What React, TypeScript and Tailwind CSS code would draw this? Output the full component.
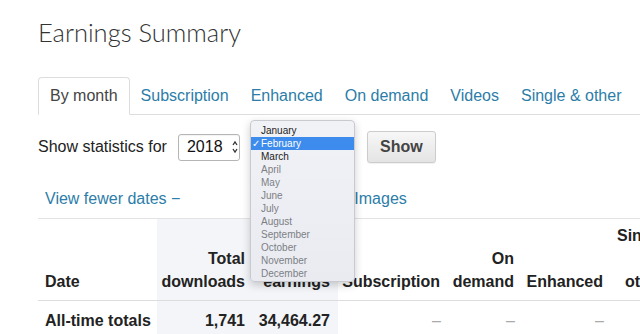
import React from 'react';

const tabs = ['By month', 'Subscription', 'Enhanced', 'On demand', 'Videos', 'Single & other'];

const months = [
    'January', 'February', 'March', 'April', 'May', 'June',
    'July', 'August', 'September', 'October', 'November', 'December',
];

const App: React.FC = () => {
    return (
        <div className="relative w-[640px] h-[334px] overflow-hidden bg-white pl-[38px] font-['Liberation_Sans',Arial,sans-serif] text-[#333]">
            {/* title */}
            <h1 className="pt-[15px] h-[77px] font-['Lato',sans-serif] font-light text-[25.5px] leading-[34px] text-[#333] whitespace-nowrap">
                Earnings Summary
            </h1>

            {/* tabs */}
            <div className="flex w-[602px] h-[38px] border-b border-[#ddd] text-[16px] whitespace-nowrap">
                {tabs.map((tab, i) => (
                    <div
                        key={tab}
                        className={
                            i === 0
                                ? 'shrink-0 flex items-center px-[11px] -mb-px bg-white border border-[#ddd] border-b-white rounded-t-[4px] text-[#444]'
                                : 'shrink-0 flex items-center px-[11px] text-[#2c7da8]'
                        }
                    >
                        {tab}
                    </div>
                ))}
            </div>

            {/* controls */}
            <div className="flex items-center h-[32px] mt-[16px] text-[16px] whitespace-nowrap">
                <span className="text-[#222]">Show statistics for</span>
                <div className="flex items-center ml-[11px] w-[62px] h-[27px] border border-[#b5b5b5] rounded-[3px] bg-white pl-[8px] shadow-[inset_0_1px_1px_rgba(0,0,0,0.05)]">
                    <span className="text-[#111]">2018</span>
                    <svg className="ml-[9px]" width="6" height="14" viewBox="0 0 6 14">
                        <path d="M1 5 L3 2 L5 5" fill="none" stroke="#333" strokeWidth="1.3" />
                        <path d="M1 9 L3 12 L5 9" fill="none" stroke="#333" strokeWidth="1.3" />
                    </svg>
                </div>
                <div className="ml-[10px] w-[105px] h-[27px]" />
                <button className="ml-[12px] w-[69px] h-[32px] rounded-[3px] border border-[#ccc] bg-gradient-to-b from-[#f7f7f7] to-[#e4e4e4] font-bold text-[#444] text-[16px] shadow-[0_1px_1px_rgba(0,0,0,0.06)]">
                    Show
                </button>
            </div>

            {/* links */}
            <div className="flex items-center h-[24px] mt-[24px] text-[16px] text-[#2c7da8] whitespace-nowrap">
                <span className="ml-[7px]">View fewer dates −</span>
                <span className="ml-[174px]">Images</span>
            </div>

            {/* table */}
            <table className="w-[634px] max-w-none mt-[7px] border-t border-[#e3e3e3] border-collapse table-fixed text-[16px] text-[#222]">
                <colgroup>
                    <col className="w-[119px]" />
                    <col className="w-[95px]" />
                    <col className="w-[86px]" />
                    <col className="w-[107px]" />
                    <col className="w-[76px]" />
                    <col className="w-[89px]" />
                    <col className="w-[62px]" />
                </colgroup>
                <thead>
                    <tr className="h-[82px] border-b border-[#ddd] font-bold leading-[23px]">
                        <th className="align-bottom text-left pl-[7px] pb-[7px]">Date</th>
                        <th className="align-bottom text-right pr-[7px] pb-[7px] bg-[#f3f5f9]">Total<br />downloads</th>
                        <th className="align-bottom text-right pr-[8px] pb-[7px] bg-[#f3f5f9]">Total<br />earnings</th>
                        <th className="align-bottom text-right pr-[5px] pb-[7px]">Subscription</th>
                        <th className="align-bottom text-right pr-[7px] pb-[7px]">On<br />demand</th>
                        <th className="align-bottom text-right pr-[7px] pb-[7px]">Enhanced</th>
                        <th className="align-bottom text-right pr-[7px] pb-[7px]">Single<br />&amp;<br />other</th>
                    </tr>
                </thead>
                <tbody>
                    <tr className="font-bold leading-[22px] whitespace-nowrap">
                        <td className="pl-[7px] py-[9px]">All-time totals</td>
                        <td className="text-right pr-[7px] bg-[#f3f5f9]">1,741</td>
                        <td className="text-right pr-[8px] bg-[#f3f5f9]">34,464.27</td>
                        <td className="text-right pr-[4px] font-normal text-[#aaa]">–</td>
                        <td className="text-right pr-[6px] font-normal text-[#aaa]">–</td>
                        <td className="text-right pr-[6px] font-normal text-[#aaa]">–</td>
                        <td className="text-right pr-[7px] font-normal text-[#aaa]">–</td>
                    </tr>
                </tbody>
            </table>

            {/* open month menu */}
            <div className="absolute left-[250px] top-[120px] w-[105px] h-[162px] py-[3px] rounded-[4px] border border-[#c9cad0] bg-gradient-to-b from-[#f1f2f6] to-[#e9ebf1] shadow-[0_3px_8px_rgba(0,0,0,0.2)] text-[10px] leading-[13px]">
                {months.map((m, i) => (
                    <div
                        key={m}
                        className={
                            i === 1
                                ? 'flex h-[13px] items-center bg-[#3d8bec] text-white pl-[1px]'
                                : i === 0 || i === 2
                                    ? 'flex h-[13px] items-center text-[#222] pl-[10px]'
                                    : 'flex h-[13px] items-center text-[#7d7f85] pl-[10px]'
                        }
                    >
                        {i === 1 && <span className="w-[9px]">✓</span>}
                        {m}
                    </div>
                ))}
            </div>
        </div>
    );
};

export default App;
